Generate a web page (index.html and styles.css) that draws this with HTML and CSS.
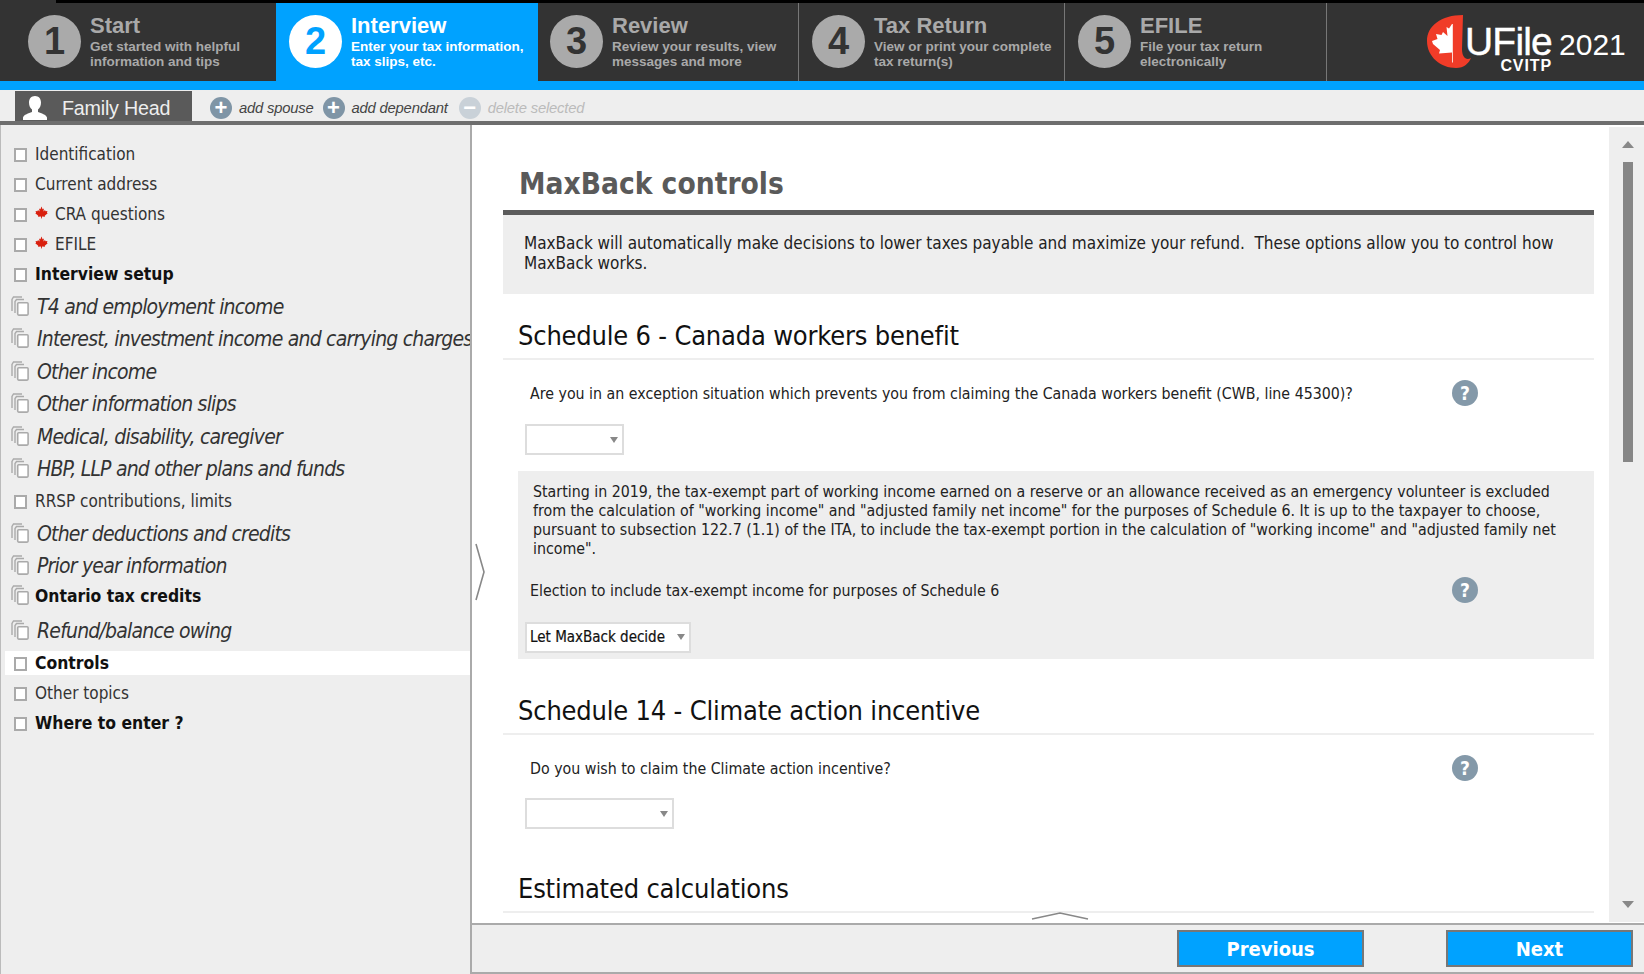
FILE: index.html
```html
<!DOCTYPE html>
<html lang="en">
<head>
<meta charset="utf-8">
<title>UFile 2021 - MaxBack controls</title>
<link rel="stylesheet" href="styles.css">
</head>
<body>
<svg class="defs" width="0" height="0" aria-hidden="true">
  <defs>
    <symbol id="leaf" viewBox="0 0 24 24"><path d="M12 1L14 6L16.5 4.5L15.5 10L18.5 7.5L19.5 9.5L23 9L22 12.5L23.5 13.5L18 18L18.5 20L13 19.3L12.6 23L11.4 23L11 19.3L5.5 20L6 18L.5 13.5L2 12.5L1 9L4.5 9.5L5.5 7.5L8.5 10L7.5 4.5L10 6Z"/></symbol>
    <symbol id="multi" viewBox="0 0 18 20"><path d="M1 15V3.5L2.5 1H11M4 17V5.5L5.5 3.5H13" fill="none" stroke="#aaa" stroke-width="1.4"/><rect x="6.7" y="6.7" width="10.4" height="12.4" rx="1" fill="#fff" stroke="#aaa" stroke-width="1.6"/></symbol>
  </defs>
</svg>
<header class="header">
  <div class="topline"></div>
  <nav class="steps">
    <div class="step step-first"><span class="num">1</span><div><div class="step-title">Start</div><div class="step-sub">Get started with helpful<br>information and tips</div></div></div>
    <div class="step step-active"><span class="num">2</span><div><div class="step-title">Interview</div><div class="step-sub">Enter your tax information,<br>tax slips, etc.</div></div></div>
    <div class="step step-sep w3"><span class="num">3</span><div><div class="step-title">Review</div><div class="step-sub">Review your results, view<br>messages and more</div></div></div>
    <div class="step step-sep w4"><span class="num">4</span><div><div class="step-title">Tax Return</div><div class="step-sub">View or print your complete<br>tax return(s)</div></div></div>
    <div class="step step-sep w5"><span class="num">5</span><div><div class="step-title">EFILE</div><div class="step-sub">File your tax return<br>electronically</div></div></div>
    <div class="logo">
      <svg class="logo-mark" viewBox="0 0 45 53" width="45" height="53" aria-hidden="true">
        <path fill="#f03c28" d="M36 0C14 0 0 11 0 26C0 42 14 53 29 53C37 53 42 48 44 43C39 46 35 42 35 34Z"/>
        <path fill="#fff" d="M25 9L22 13.500L19.500 12L20.500 21L16 17L14.500 20L9 19L10.500 24L5 26L6 29L13 35L12 38.500L25 37.500V47.500H25.800V9Z"/>
      </svg>
      <div class="logo-words"><span class="logo-name">UFile</span><span class="logo-cvitp">CVITP</span></div>
      <span class="logo-year">2021</span>
    </div>
  </nav>
</header>
<div class="toolbar">
  <div class="person-tab">
    <svg class="person" viewBox="0 0 26 24" width="26" height="24" aria-hidden="true"><path fill="#fff" d="M13 0c3.800 0 6 2.800 6 6.500 0 3-1.200 5.800-3 7v2.500c3.500 1.500 8 2.500 9 5.500V24H1v-2.500c1-3 5.500-4 9-5.500v-2.500c-1.800-1.200-3-4-3-7C7 2.800 9.200 0 13 0z"/></svg>
    <span>Family Head</span>
  </div>
  <div class="tool"><span class="round">+</span><em>add spouse</em></div>
  <div class="tool"><span class="round">+</span><em>add dependant</em></div>
  <div class="tool tool-off"><span class="round">&minus;</span><em>delete selected</em></div>
</div>
<div class="workspace">
  <aside class="sidebar">
    <div class="row"><span class="check"></span><span>Identification</span></div>
    <div class="row"><span class="check"></span><span>Current address</span></div>
    <div class="row"><span class="check"></span><svg class="leaf"><use href="#leaf"/></svg><span>CRA questions</span></div>
    <div class="row"><span class="check"></span><svg class="leaf"><use href="#leaf"/></svg><span>EFILE</span></div>
    <div class="row row-bold"><span class="check"></span><span>Interview setup</span></div>
    <div class="row row-it"><svg class="multi"><use href="#multi"/></svg><span>T4 and employment income</span></div>
    <div class="row row-it"><svg class="multi"><use href="#multi"/></svg><span>Interest, investment income and carrying charges</span></div>
    <div class="row row-it"><svg class="multi"><use href="#multi"/></svg><span>Other income</span></div>
    <div class="row row-it"><svg class="multi"><use href="#multi"/></svg><span>Other information slips</span></div>
    <div class="row row-it"><svg class="multi"><use href="#multi"/></svg><span>Medical, disability, caregiver</span></div>
    <div class="row row-it"><svg class="multi"><use href="#multi"/></svg><span>HBP, LLP and other plans and funds</span></div>
    <div class="row row-rrsp"><span class="check"></span><span>RRSP contributions, limits</span></div>
    <div class="row row-it"><svg class="multi"><use href="#multi"/></svg><span>Other deductions and credits</span></div>
    <div class="row row-it"><svg class="multi"><use href="#multi"/></svg><span>Prior year information</span></div>
    <div class="row row-bold"><svg class="multi"><use href="#multi"/></svg><span>Ontario tax credits</span></div>
    <div class="row row-it row-refund"><svg class="multi"><use href="#multi"/></svg><span>Refund/balance owing</span></div>
    <div class="row row-bold row-current"><span class="check"></span><span>Controls</span></div>
    <div class="row row-after"><span class="check"></span><span>Other topics</span></div>
    <div class="row row-bold"><span class="check"></span><span>Where to enter ?</span></div>
  </aside>
  <main class="main">
    <svg class="collapse" viewBox="0 0 10 58" width="10" height="58" aria-hidden="true"><path d="M1 1L9 29L1 57" fill="none" stroke="#888" stroke-width="1.600"/></svg>
    <div class="pane">
      <div class="content">
        <h1 class="page-title">MaxBack controls</h1>
        <p class="intro">MaxBack will automatically make decisions to lower taxes payable and maximize your refund.&nbsp; These options allow you to control how<br>MaxBack works.</p>
        <h2 class="section first">Schedule 6 - Canada workers benefit</h2>
        <div class="question"><span>Are you in an exception situation which prevents you from claiming the Canada workers benefit (CWB, line 45300)?</span><span class="help">?</span></div>
        <div class="select s1"><span></span><i class="caret"></i></div>
        <div class="note">
          <p>Starting in 2019, the tax-exempt part of working income earned on a reserve or an allowance received as an emergency volunteer is excluded<br>from the calculation of "working income" and "adjusted family net income" for the purposes of Schedule 6. It is up to the taxpayer to choose,<br>pursuant to subsection 122.7 (1.1) of the ITA, to include the tax-exempt portion in the calculation of "working income" and "adjusted family net<br>income".</p>
          <div class="question in-note"><span>Election to include tax-exempt income for purposes of Schedule 6</span><span class="help">?</span></div>
          <div class="select s2"><span>Let MaxBack decide</span><i class="caret"></i></div>
        </div>
        <h2 class="section">Schedule 14 - Climate action incentive</h2>
        <div class="question"><span>Do you wish to claim the Climate action incentive?</span><span class="help">?</span></div>
        <div class="select s3"><span></span><i class="caret"></i></div>
        <h2 class="section last">Estimated calculations</h2>
        <svg class="expand" viewBox="0 0 58 8" width="58" height="8" aria-hidden="true"><path d="M1 7L29 1L57 7" fill="none" stroke="#888" stroke-width="1.600"/></svg>
      </div>
      <div class="scrollbar">
        <i class="arrow-up"></i>
        <div class="track"><div class="thumb"></div></div>
        <i class="arrow-down"></i>
      </div>
    </div>
    <footer class="footer">
      <button class="nav-btn" type="button">Previous</button>
      <button class="nav-btn" type="button">Next</button>
    </footer>
  </main>
</div>
</body>
</html>
```
FILE: styles.css
```css
* { box-sizing: border-box; }
html, body { margin: 0; padding: 0; }
body {
  width: 1644px;
  height: 974px;
  overflow: hidden;
  display: flex;
  flex-direction: column;
  background: #fff;
  color: #222;
  font-family: "DejaVu Sans Condensed", "DejaVu Sans", sans-serif;
  font-stretch: condensed;
}
.defs { position: absolute; }

/* header */
.header { background: #333; border-bottom: 9px solid #00a2ff; height: 90px; flex: none; font-family: "Liberation Sans", Arial, sans-serif; font-stretch: normal; }
.topline { height: 3px; margin-left: 56px; background: #000; }
.steps { display: flex; height: 78px; }
.step { width: 262px; height: 78px; display: flex; align-items: center; gap: 9px; padding: 0 0 1px 13px; color: #a9a9a9; flex: none; }
.step-first { width: 276px; padding-left: 28px; }
.step-active { background: #00a2ff; color: #fff; }
.step-sep { border-right: 1px solid #777; }
.w3 { width: 261px; padding-left: 12px; }
.w4 { width: 266px; }
.w5 { width: 262px; }
.num { width: 53px; height: 53px; border-radius: 50%; background: #aaa; color: #333; font-size: 38px; line-height: 53px; font-weight: 700; text-align: center; flex: none; }
.step-active .num { background: #fff; color: #00a2ff; }
.step-title { font-size: 22px; line-height: 26px; font-weight: 700; margin-top: -2px; }
.step-sub { font-size: 13.5px; line-height: 15px; font-weight: 700; }
.logo { display: flex; align-items: flex-start; margin-left: 100px; color: #fff; }
.logo-mark { margin-top: 12px; flex: none; }
.logo-words { display: flex; flex-direction: column; align-items: flex-end; margin-left: -7px; margin-top: 21px; }
.logo-name { font-size: 39px; line-height: 36px; letter-spacing: -.8px; -webkit-text-stroke: .4px #fff; }
.logo-cvitp { font-size: 16px; line-height: 12px; font-weight: 700; letter-spacing: .9px; }
.logo-year { font-size: 30px; line-height: 34px; margin: 25px 0 0 7px; }

/* toolbar */
.toolbar { height: 35px; flex: none; background: #eee; border-bottom: 4px solid #6e6e6e; display: flex; align-items: stretch; padding-left: 15px; font-family: "Liberation Sans", Arial, sans-serif; font-stretch: normal; }
.person-tab { width: 177px; margin-top: 1px; padding: 4px 0 0 7px; background: #5a5a5a; color: #eee; display: flex; align-items: center; gap: 14px; font-size: 19.700px; letter-spacing: -.2px; }
.tool { display: flex; align-items: center; gap: 7px; padding-top: 4px; font-size: 14.800px; color: #444; margin-left: 9px; }
.person-tab + .tool { margin-left: 18px; }
.tool em { letter-spacing: -.2px; margin-top: 1px; }
.round { width: 22px; height: 22px; border-radius: 50%; background: #7f95a6; color: #fff; font-size: 22px; line-height: 21px; font-weight: 700; text-align: center; }
.tool-off { color: #bbb; margin-left: 11px; }
.tool-off .round { background: #c9d1d8; }

/* layout */
.workspace { flex: 1; display: flex; min-height: 0; }
.sidebar { width: 472px; flex: none; background: #eee; border-left: 1px solid #bbb; border-right: 2px solid #aaa; padding: 13.500px 0 0 4px; overflow: hidden; }
.row { height: 30px; display: flex; align-items: center; padding-left: 9px; font-size: 17px; color: #333; white-space: nowrap; overflow: hidden; }
.row-bold { font-weight: 700; font-size: 17.400px; color: #111; }
.row-it { height: 32.5px; padding-top: 3.500px; font-size: 21px; font-style: italic; color: #333; letter-spacing: -.8px; }
.row-it span:last-child { margin-left: 2px; }
.row-rrsp { margin-top: 2px; }
.row-refund { margin-top: 2.700px; }
.row-current { height: 24px; margin-top: 5px; background: #fff; }
.row-after { margin-top: 3px; }
.check { width: 13px; height: 14px; background: #fff; border: 2px solid #aaa; margin: 2px 8px 0 0; flex: none; }
.leaf { width: 13px; height: 13px; fill: #d9200f; margin: -3px 7px 0 0; flex: none; }
.multi { width: 18px; height: 20px; margin: -2px 6px 0 -3px; flex: none; }

/* main */
.main { flex: 1; min-width: 0; display: flex; flex-direction: column; position: relative; }
.collapse { position: absolute; left: 3px; top: 418px; }
.pane { flex: 1; min-height: 0; display: flex; }
.content { flex: 1; min-width: 0; padding: 0 15px 0 31px; position: relative; overflow: hidden; }
.page-title { margin: 0; padding: 39px 0 0 16px; height: 90px; border-bottom: 5px solid #5c5c5c; font-size: 29.600px; line-height: 40px; color: #5a5a5a; font-weight: 700; }
.intro { margin: 0; height: 79px; padding: 18px 20px 0 21px; background: #eee; font-size: 17px; line-height: 20px; color: #222; }
.section { margin: 35px 0 0; padding: 0 0 5px 15px; border-bottom: 2px solid #eee; font-size: 27px; line-height: 34px; letter-spacing: -.2px; font-weight: 400; color: #111; }
.section.first { margin-top: 25px; }
.section.last { margin-top: 43px; }
.question { margin-top: 20px; padding: 0 116px 0 27px; height: 26px; display: flex; align-items: center; justify-content: space-between; font-size: 15.800px; color: #222; }
.help { width: 26px; height: 26px; border-radius: 50%; background: #8499a9; color: #fff; font-size: 19px; line-height: 26px; font-weight: 700; text-align: center; flex: none; }
.select { margin: 18px 0 0 22px; height: 31px; background: #fff; border: 2px solid #ddd; display: flex; align-items: center; justify-content: space-between; padding: 0 4px 0 3px; font-size: 15px; color: #111; -webkit-text-stroke: .2px #111; }
.caret { width: 0; height: 0; border: 4px solid transparent; border-top: 6px solid #888; border-bottom: 0; }
.s1 { width: 99px; }
.s2 { width: 166px; margin: 18.500px 0 0 7px; }
.s3 { width: 149px; margin-top: 17px; }
.note { margin: 16px 0 0 15px; height: 188px; padding-top: 12px; background: #eee; }
.note p { margin: 0; padding-left: 15px; font-size: 15.800px; line-height: 18.900px; color: #222; }
.question.in-note { margin-top: 18.500px; padding-left: 12px; }
.expand { position: absolute; left: 559px; bottom: 3px; }

/* scrollbar */
.scrollbar { width: 35px; flex: none; background: #eee; margin-top: 2px; position: relative; display: flex; flex-direction: column; align-items: center; padding: 14px 0 0 2px; height: 795px; }
.arrow-up { width: 0; height: 0; border: 6px solid transparent; border-bottom: 7px solid #888; border-top: 0; }
.track { flex: 1; width: 10px; margin-top: 14px; }
.thumb { width: 10px; height: 300px; background: #868686; }
.arrow-down { width: 0; height: 0; border: 6px solid transparent; border-top: 7px solid #888; border-bottom: 0; margin-bottom: 14px; }

/* footer */
.footer { height: 51px; flex: none; background: #eee; border-top: 2px solid #aaa; border-bottom: 2px solid #aaa; display: flex; justify-content: flex-end; gap: 82px; padding: 5px 11px 0 0; }
.nav-btn { width: 187px; height: 37px; background: #00a2ff; border: 2px solid #777; color: #fff; font: inherit; font-size: 20px; font-weight: 700; padding: 0; }
```
